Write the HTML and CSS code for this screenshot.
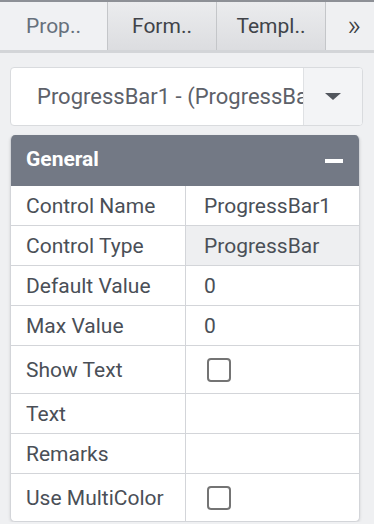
FILE: index.html
```html
<!DOCTYPE html>
<html lang="en">
<head>
  <meta charset="UTF-8" />
  <title>Properties</title>
  <link rel="stylesheet" href="styles.css">
</head>
<body>
  <div class="tabs">
    <div class="tab active">Prop..</div>
    <div class="tab">Form..</div>
    <div class="tab">Templ..</div>
    <div class="tab more">&raquo;</div>
  </div>

  <div class="picker">
    <div class="picker-text">ProgressBar1 - (ProgressBar)</div>
    <div class="picker-btn"><span class="caret"></span></div>
  </div>

  <div class="panel">
    <div class="panel-head">
      <span>General</span>
      <span class="collapse"></span>
    </div>
    <div class="row">
      <div class="label">Control Name</div>
      <div class="value">ProgressBar1</div>
    </div>
    <div class="row">
      <div class="label">Control Type</div>
      <div class="value readonly">ProgressBar</div>
    </div>
    <div class="row">
      <div class="label">Default Value</div>
      <div class="value">0</div>
    </div>
    <div class="row">
      <div class="label">Max Value</div>
      <div class="value">0</div>
    </div>
    <div class="row tall">
      <div class="label">Show Text</div>
      <div class="value"><span class="check"></span></div>
    </div>
    <div class="row">
      <div class="label">Text</div>
      <div class="value"></div>
    </div>
    <div class="row">
      <div class="label">Remarks</div>
      <div class="value"></div>
    </div>
    <div class="row tall last">
      <div class="label">Use MultiColor</div>
      <div class="value"><span class="check"></span></div>
    </div>
  </div>
</body>
</html>
```

FILE: styles.css
```css
body {
  margin: 0;
  font-family: Roboto, 'Liberation Sans', sans-serif;
  background: #eff0f2;
  color: #4a4f57;
}

.tabs {
  display: flex;
  height: 48px;
  border-top: 2px solid #8d9096;
  border-bottom: 3px solid #d3d5d8;
}

.tab {
  width: 109px;
  display: flex;
  align-items: center;
  justify-content: center;
  font-size: 21px;
  color: #404349;
  background: linear-gradient(#ebecee, #dcdde0);
  border-left: 1px solid #c4c6c9;
  box-sizing: border-box;
}

.tab.active {
  width: 107px;
  border-left: none;
  background: #f0f1f3;
  color: #66707c;
}

.tab.more {
  flex: 1;
  font-size: 30px;
  font-weight: 300;
  color: #3c3f44;
  background: #eff0f2;
  padding: 0 0 4px 8px;
}

.picker {
  display: flex;
  margin: 14px 11px 0 10px;
  height: 57px;
  background: #fff;
  border: 1px solid #d9dbde;
  border-radius: 4px;
  overflow: hidden;
}

.picker-text {
  flex: 1;
  padding-left: 26px;
  font-size: 22px;
  line-height: 57px;
  white-space: nowrap;
  overflow: hidden;
  color: #5d6169;
}

.picker-btn {
  width: 58px;
  border-left: 1px solid #dfe1e4;
  background: #f3f4f6;
  display: flex;
  align-items: center;
  justify-content: center;
}

.caret {
  width: 0;
  height: 0;
  border-left: 8px solid transparent;
  border-right: 8px solid transparent;
  border-top: 7px solid #52565d;
}

.panel {
  margin: 9px 14px 0 10px;
  background: #fff;
  border: 1px solid #d3d5d9;
  border-top: none;
  border-radius: 5px;
  overflow: hidden;
  box-shadow: 0 1px 3px rgba(0, 0, 0, 0.12);
}

.panel-head {
  height: 47px;
  background: #737985;
  color: #fff;
  font-size: 21px;
  font-weight: bold;
  display: flex;
  align-items: center;
  justify-content: space-between;
  padding: 0 16px 4px 15px;
}

.collapse {
  width: 18px;
  height: 4px;
  background: #fff;
  margin-top: 4px;
}

.row {
  display: flex;
  height: 39px;
  border-bottom: 1px solid #d3d5d9;
  font-size: 21px;
}

.row.tall {
  height: 47px;
}

.row.last {
  border-bottom: none;
}

.label {
  width: 159px;
  padding-left: 15px;
  border-right: 1px solid #d3d5d9;
  display: flex;
  align-items: center;
}

.value {
  flex: 1;
  padding-left: 18px;
  display: flex;
  align-items: center;
}

.value.readonly {
  background: #eeeff1;
}

.check {
  width: 20px;
  height: 20px;
  border: 2px solid #747474;
  border-radius: 4px;
  margin-left: 3px;
}
```
